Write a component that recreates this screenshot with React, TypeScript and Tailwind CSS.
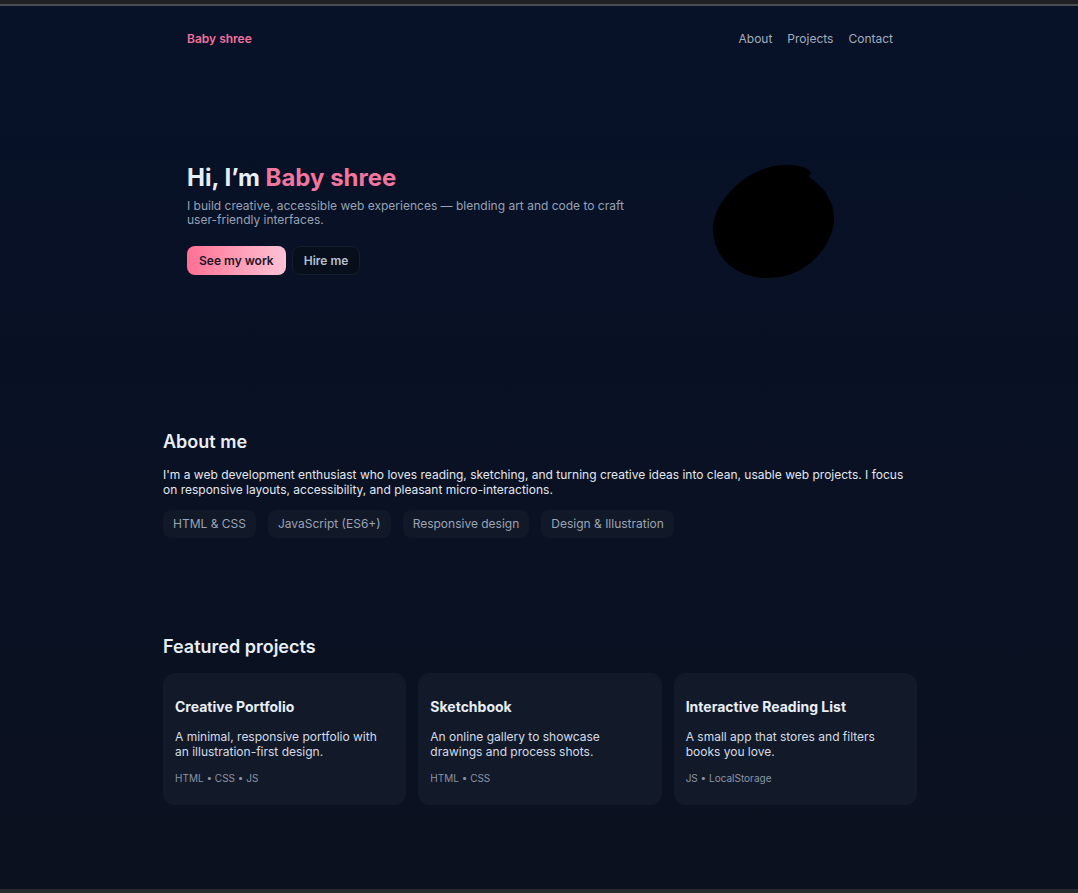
import React from 'react';

const skills = ['HTML & CSS', 'JavaScript (ES6+)', 'Responsive design', 'Design & Illustration'];

const projects = [
  {
    title: 'Creative Portfolio',
    desc: 'A minimal, responsive portfolio with an illustration-first design.',
    tags: 'HTML • CSS • JS',
  },
  {
    title: 'Sketchbook',
    desc: 'An online gallery to showcase drawings and process shots.',
    tags: 'HTML • CSS',
  },
  {
    title: 'Interactive Reading List',
    desc: 'A small app that stores and filters books you love.',
    tags: 'JS • LocalStorage',
  },
];

const App: React.FC = () => {
  return (
    <div className="h-[893px] flex flex-col bg-[#1e1f22] font-['Inter',sans-serif] overflow-hidden">
      {/* window chrome */}
      <div className="h-[4px] bg-[#1f2023]"></div>
      <div className="h-[2px] bg-[#4a4d56]"></div>

      <div className="flex-1 bg-gradient-to-b from-[#071128] to-[#0b111f]">
        <div className="w-[754px] mx-auto translate-x-px">
          {/* Header */}
          <header className="h-[65px] pl-6 pr-[24px] flex items-center justify-between">
            <a className="text-[12px] font-semibold text-[#f0709c]">Baby shree</a>
            <nav className="flex gap-[15px] text-[12px] text-[#a3adbd]">
              <a>About</a>
              <a>Projects</a>
              <a>Contact</a>
            </nav>
          </header>

          {/* Hero */}
          <section className="px-6 pt-[92px] flex items-start justify-between">
            <div className="w-[460px]">
              <h1 className="text-[24px] leading-[29px] font-bold text-[#e8eef7]">
                Hi, I’m <span className="text-[#f0769f]">Baby shree</span>
              </h1>
              <p className="mt-[7px] text-[12px] leading-[14px] text-[#97a2b4]">
                I build creative, accessible web experiences — blending art and code to craft user-friendly interfaces.
              </p>
              <div className="mt-[19px] flex gap-[6px]">
                <button className="h-[29px] px-3 rounded-lg bg-gradient-to-r from-[#ff6f94] to-[#ffc2d5] text-[12px] font-semibold text-[#1b1626]">
                  See my work
                </button>
                <button className="h-[29px] px-[11px] rounded-lg border border-[#161d2c] bg-[#070e1c] text-[12px] font-semibold text-[#b6c0d0]">
                  Hire me
                </button>
              </div>
            </div>
            <div className="w-[238px] mt-[2px] flex justify-center">
              <svg width="122" height="114" viewBox="0 0 122 114" overflow="visible">
                <path
                  d="M 60 1 C 75 -1 92 0 97 6 C 99 8 97 10 95 11 C 112 22 122 38 121 55 C 120 80 95 112 57 113 C 25 114 2 95 0 67 C -1 40 25 10 60 1 Z"
                  fill="#000000"
                />
              </svg>
            </div>
          </section>

          {/* About */}
          <section className="mt-[151px]">
            <h2 className="text-[18px] leading-[24px] font-semibold text-[#e8eef7]">About me</h2>
            <p className="mt-[13px] text-[12px] leading-[15px] text-[#e2e8f0]">
              I'm a web development enthusiast who loves reading, sketching, and turning creative ideas into clean, usable web projects. I focus on responsive layouts, accessibility, and pleasant micro-interactions.
            </p>
            <div className="mt-[13px] flex gap-3">
              {skills.map((s) => (
                <span key={s} className="h-[28px] px-[10px] flex items-center rounded-lg bg-[#111828] text-[12px] text-[#9aa4b4]">
                  {s}
                </span>
              ))}
            </div>
          </section>

          {/* Projects */}
          <section className="mt-[97px]">
            <h2 className="text-[18px] leading-[24px] font-semibold text-[#e8eef7]">Featured projects</h2>
            <div className="mt-[14px] grid grid-cols-3 gap-3">
              {projects.map((p) => (
                <div key={p.title} className="h-[132px] rounded-xl bg-[#121a2a] pl-3 pr-5 pt-[24px]">
                  <h3 className="text-[14px] leading-[20px] font-bold text-[#e8eef7]">{p.title}</h3>
                  <p className="mt-[12px] text-[12px] leading-[15px] text-[#d5dbe5]">{p.desc}</p>
                  <p className="mt-[12px] text-[10px] leading-[14px] text-[#8a93a3]">{p.tags}</p>
                </div>
              ))}
            </div>
          </section>
        </div>
      </div>

      <div className="h-[4px] bg-[#2a2b2f]"></div>
    </div>
  );
};

export default App;
